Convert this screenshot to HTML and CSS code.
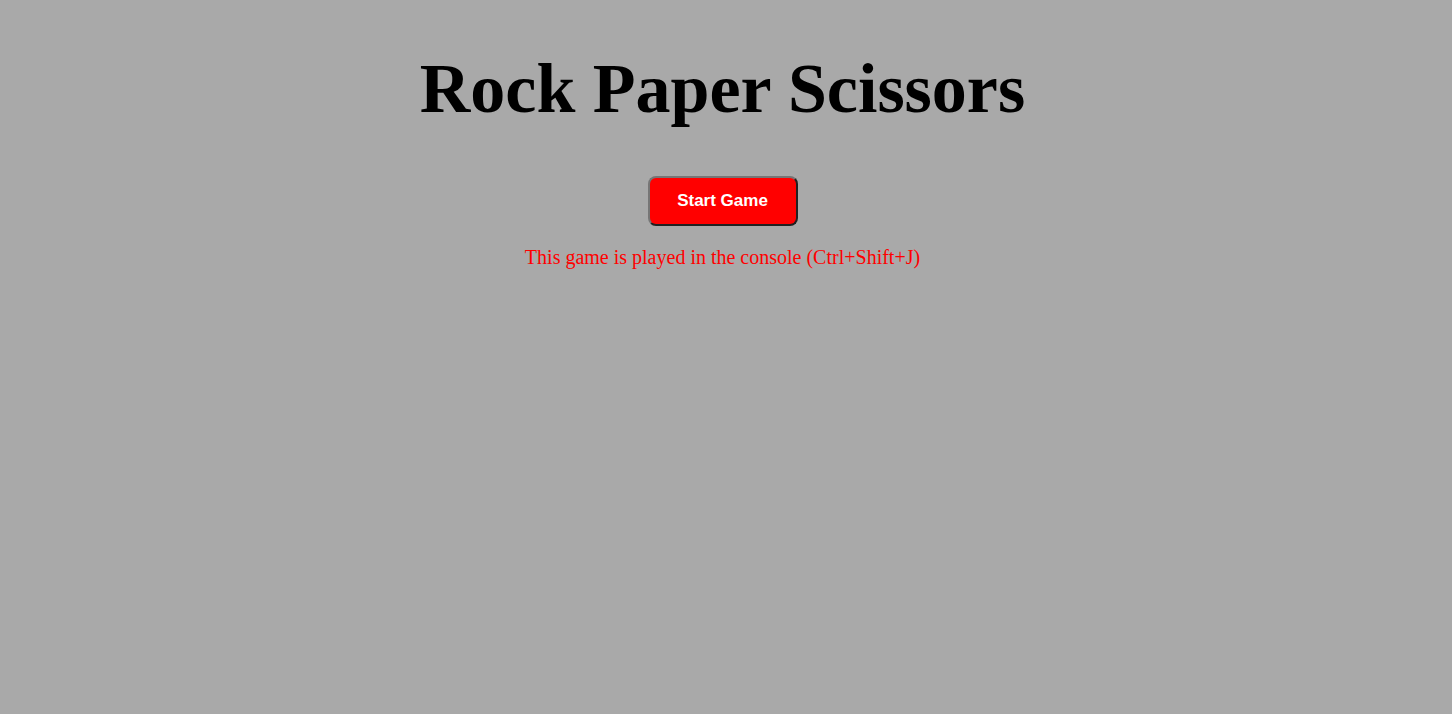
FILE: index.html
```html
<!DOCTYPE html>
<html>
<head>
<meta charset="utf-8">
<link rel="stylesheet" href="styles.css">
</head>
<body>
<main class="page">
  <h1 class="title">Rock Paper Scissors</h1>
  <button class="start-btn">Start Game</button>
  <p class="note">This game is played in the console (Ctrl+Shift+J)</p>
</main>
</body>
</html>
```
FILE: styles.css
```css
html, body {
  margin: 0;
  padding: 0;
}
body {
  background: #a9a9a9;
  font-family: "Liberation Serif", serif;
}
.page {
  display: flex;
  flex-direction: column;
  align-items: center;
  padding: 49px 7px 0 0;
}
.title {
  margin: 0;
  font-size: 70px;
  font-weight: bold;
  color: #000;
}
.start-btn {
  margin-top: 47px;
  width: 150px;
  height: 50px;
  background: #ff0000;
  color: #fff;
  font-family: "Liberation Sans", Arial, sans-serif;
  font-weight: bold;
  font-size: 17px;
  border: 2px outset #767676;
  border-radius: 8px;
}
.note {
  margin: 20px 0 0;
  font-size: 20px;
  color: #ff0000;
}
```
